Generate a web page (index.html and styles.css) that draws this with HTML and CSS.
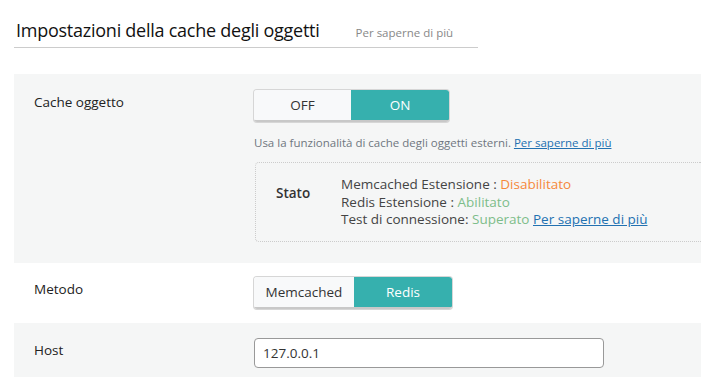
FILE: index.html
```html
<!DOCTYPE html>
<html>

<head>
    <title>Impostazioni della cache degli oggetti</title>
    <link rel="stylesheet" href="styles.css">
</head>

<body>
    <div class="wrap">
        <div class="heading">
            <h2>Impostazioni della cache degli oggetti</h2>
            <a href="#" class="more">Per saperne di più</a>
        </div>

        <div class="row grey first">
            <div class="label">Cache oggetto</div>
            <div class="field">
                <div class="switch">
                    <span class="opt">OFF</span>
                    <span class="opt active">ON</span>
                </div>
                <p class="desc">Usa la funzionalità di cache degli oggetti esterni. <a href="#">Per saperne di più</a></p>
                <div class="status">
                    <div class="status-title">Stato</div>
                    <div class="status-lines">
                        <div>Memcached Estensione : <span class="bad">Disabilitato</span></div>
                        <div>Redis Estensione : <span class="good">Abilitato</span></div>
                        <div>Test di connessione: <span class="good">Superato</span> <a href="#">Per saperne di più</a></div>
                    </div>
                </div>
            </div>
        </div>

        <div class="row method-row">
            <div class="label">Metodo</div>
            <div class="field">
                <div class="switch method">
                    <span class="opt">Memcached</span>
                    <span class="opt active">Redis</span>
                </div>
            </div>
        </div>

        <div class="row grey">
            <div class="label">Host</div>
            <div class="field">
                <input type="text" class="host" value="127.0.0.1">
            </div>
        </div>
    </div>
</body>

</html>
```

FILE: styles.css
```css
/* Reset */
html, body {
  margin: 0;
  padding: 0;
}

body {
  background-color: #fff;
  font-family: "Open Sans", sans-serif;
  color: #333;
  overflow: hidden;
}

.wrap {
  margin-left: 14px;
}

/* Page heading */
.heading {
  display: flex;
  align-items: baseline;
  width: 464px;
  border-bottom: 1px solid #ccc;
  margin-top: 18px;
  padding-bottom: 5px;
}

.heading h2 {
  margin: 0 0 0 2px;
  font-size: 18px;
  font-weight: 500;
  color: #111;
  letter-spacing: -0.25px;
}

.heading .more {
  margin-left: 36px;
  font-size: 11.5px;
  color: #888;
  text-decoration: none;
}

/* Settings rows */
.row {
  display: flex;
  padding: 15px 0 14px 20px;
}

.row.first {
  margin-top: 26px;
  padding-top: 16px;
  padding-bottom: 21px;
}

.row.method-row {
  padding-top: 14px;
}

.grey {
  background-color: #f5f6f6;
}

.label {
  width: 220px;
  flex-shrink: 0;
  font-size: 13.5px;
  color: #222;
  padding-top: 3px;
}

.field {
  flex: 1;
  min-width: 0;
}

/* Toggle switch */
.switch {
  display: inline-flex;
  border-radius: 3px;
  overflow: hidden;
  box-shadow: 0 0 0 1px #d6d6d6;
  border-bottom: 2px solid #c8c8c8;
}

.opt {
  width: 97px;
  height: 30px;
  line-height: 30px;
  text-align: center;
  font-size: 13.5px;
  background-color: #f8f9fa;
  color: #333;
}

.opt.active {
  background-color: #36b0ae;
  color: #fff;
  width: 98px;
  box-shadow: 0 2px 0 #23918f;
}

.method .opt {
  width: 100px;
}

.method .opt.active {
  width: 98px;
}

.desc {
  margin: 13px 0 12px 0;
  font-size: 11.5px;
  color: #6f7780;
}

.desc a, .status a {
  color: #2271b1;
}

/* Status box */
.status {
  display: flex;
  border: 1px dotted #ccc;
  border-right: none;
  border-radius: 4px 0 0 4px;
  padding: 13px 0 12px 20px;
  margin-left: 1px;
}

.status-title {
  width: 65px;
  font-weight: 600;
  font-size: 13.5px;
  padding-top: 8px;
}

.status-lines {
  font-size: 13.5px;
  line-height: 17.5px;
  color: #444;
}

.bad {
  color: #f5883b;
}

.good {
  color: #7dbd8a;
}

/* Text input */
.host {
  width: 350px;
  height: 30px;
  box-sizing: border-box;
  border: 1px solid #999;
  border-radius: 4px;
  padding: 0 8px;
  font-family: "Open Sans", sans-serif;
  font-size: 13.5px;
  color: #333;
}
```
